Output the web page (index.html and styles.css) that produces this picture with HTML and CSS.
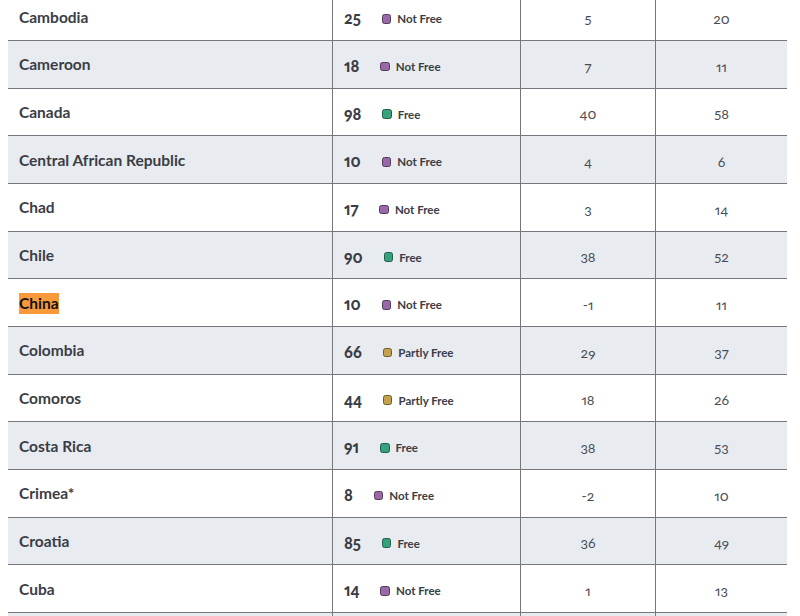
FILE: index.html
```html
<!DOCTYPE html>
<html lang="en">
<head>
<meta charset="utf-8">
<title>Freedom scores</title>
<link rel="stylesheet" href="styles.css">
</head>
<body>
<table class="scores">
  <colgroup>
    <col class="c-name"><col class="c-total"><col class="c-pr"><col class="c-cl">
  </colgroup>
  <tbody>
    <tr><td class="name">Cambodia</td><td class="total"><span class="score">25</span><span class="status nf"><i class="swatch"></i>Not Free</span></td><td class="num">5</td><td class="num">20</td></tr>
    <tr><td class="name">Cameroon</td><td class="total"><span class="score">18</span><span class="status nf"><i class="swatch"></i>Not Free</span></td><td class="num">7</td><td class="num">11</td></tr>
    <tr><td class="name">Canada</td><td class="total"><span class="score">98</span><span class="status f"><i class="swatch"></i>Free</span></td><td class="num">40</td><td class="num">58</td></tr>
    <tr><td class="name">Central African Republic</td><td class="total"><span class="score">10</span><span class="status nf"><i class="swatch"></i>Not Free</span></td><td class="num">4</td><td class="num">6</td></tr>
    <tr><td class="name">Chad</td><td class="total"><span class="score">17</span><span class="status nf"><i class="swatch"></i>Not Free</span></td><td class="num">3</td><td class="num">14</td></tr>
    <tr><td class="name">Chile</td><td class="total"><span class="score">90</span><span class="status f"><i class="swatch"></i>Free</span></td><td class="num">38</td><td class="num">52</td></tr>
    <tr><td class="name"><mark class="hl">China</mark></td><td class="total"><span class="score">10</span><span class="status nf"><i class="swatch"></i>Not Free</span></td><td class="num">-1</td><td class="num">11</td></tr>
    <tr><td class="name">Colombia</td><td class="total"><span class="score">66</span><span class="status pf"><i class="swatch"></i>Partly Free</span></td><td class="num">29</td><td class="num">37</td></tr>
    <tr><td class="name">Comoros</td><td class="total"><span class="score">44</span><span class="status pf"><i class="swatch"></i>Partly Free</span></td><td class="num">18</td><td class="num">26</td></tr>
    <tr><td class="name">Costa Rica</td><td class="total"><span class="score">91</span><span class="status f"><i class="swatch"></i>Free</span></td><td class="num">38</td><td class="num">53</td></tr>
    <tr><td class="name">Crimea*</td><td class="total"><span class="score">8</span><span class="status nf"><i class="swatch"></i>Not Free</span></td><td class="num">-2</td><td class="num">10</td></tr>
    <tr><td class="name">Croatia</td><td class="total"><span class="score">85</span><span class="status f"><i class="swatch"></i>Free</span></td><td class="num">36</td><td class="num">49</td></tr>
    <tr><td class="name">Cuba</td><td class="total"><span class="score">14</span><span class="status nf"><i class="swatch"></i>Not Free</span></td><td class="num">1</td><td class="num">13</td></tr>
    <tr class="more"><td></td><td></td><td></td><td></td></tr>
  </tbody>
</table>
</body>
</html>
```
FILE: styles.css
```css
html, body {
  margin: 0;
  padding: 0;
  background: #ffffff;
}
body {
  padding: 0 13px 0 8px;
  overflow: hidden;
  height: 616px;
  font-family: Lato, "Noto Sans", sans-serif;
  font-variant-numeric: oldstyle-nums proportional-nums;
  color: #3a3d45;
}
.scores {
  width: 779px;
  margin-top: -6.67px;
  border-collapse: separate;
  border-spacing: 0;
  table-layout: fixed;
}
.c-name { width: 324px; }
.c-total { width: 188px; }
.c-pr { width: 135px; }
.c-cl { width: 132px; }
.scores td {
  box-sizing: border-box;
  height: 47.67px;
  padding: 0;
  border-bottom: 1px solid #75777c;
  vertical-align: middle;
}
.scores tr:nth-child(even) td {
  background: #e8ebf0;
}
.scores td + td {
  border-left: 1px solid #75777c;
}
.scores td.name {
  padding: 1px 11px 0;
  font-size: 15.5px;
  font-weight: 700;
  line-height: 21px;
  color: #3a3d45;
}
.hl {
  background: #f8993b;
  color: #111111;
  display: inline-block;
  line-height: 21px;
}
.scores td.total {
  padding: 0 0 0 11px;
}
.total > * {
  vertical-align: middle;
}
.score {
  display: inline-block;
  font-size: 16px;
  font-weight: 900;
  color: #3a3d45;
  margin-right: 21px;
}
.status {
  display: inline-flex;
  align-items: center;
  font-size: 11.5px;
  font-weight: 700;
  color: #3a3d45;
  position: relative;
  top: 1px;
}
.swatch {
  display: inline-block;
  width: 7.5px;
  height: 7.5px;
  border-radius: 2.5px;
  border: 1px solid #4b3d52;
  margin-right: 6px;
}
.nf .swatch { background: #9a68a8; border-color: #4f3a57; }
.f .swatch { background: #35a27e; border-color: #265c4a; }
.pf .swatch { background: #c4a24c; border-color: #6b5a2c; }
.scores td.num {
  text-align: center;
  font-size: 14px;
  font-weight: 400;
  color: #4a4d55;
  padding-top: 4px;
}
```
